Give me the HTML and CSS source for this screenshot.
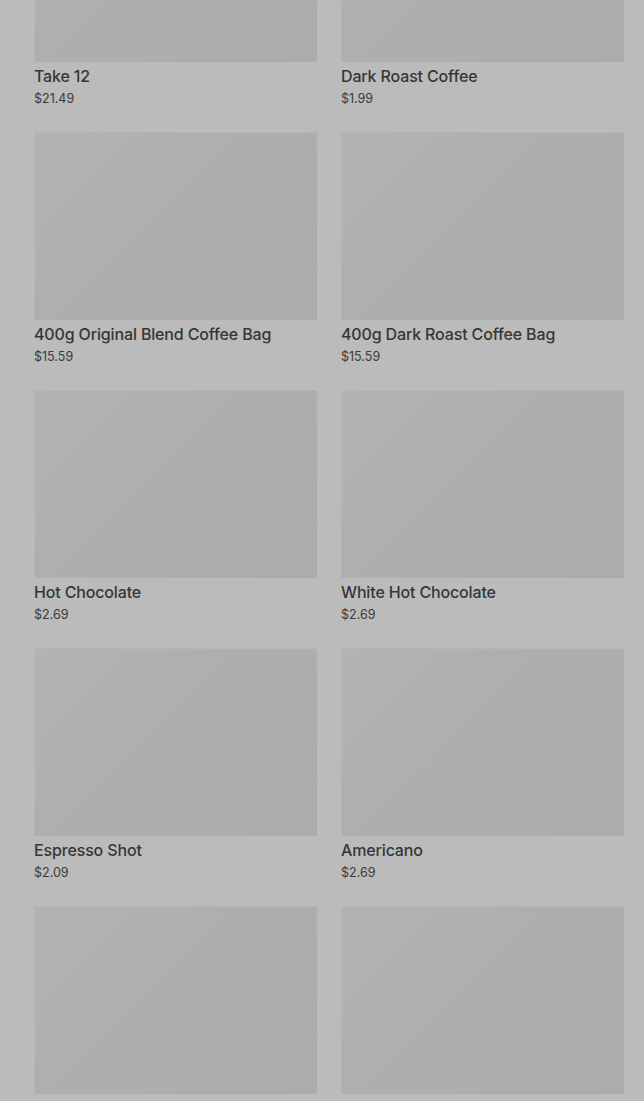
FILE: index.html
```html
<!DOCTYPE html>
<html>
<head>
<meta charset="utf-8">
<link rel="stylesheet" href="styles.css">
</head>
<body>
<main class="grid">
  <div class="card"><div class="thumb"></div><div class="name">Take 12</div><div class="price">$21.49</div></div>
  <div class="card"><div class="thumb"></div><div class="name">Dark Roast Coffee</div><div class="price">$1.99</div></div>
  <div class="card"><div class="thumb"></div><div class="name">400g Original Blend Coffee Bag</div><div class="price">$15.59</div></div>
  <div class="card"><div class="thumb"></div><div class="name">400g Dark Roast Coffee Bag</div><div class="price">$15.59</div></div>
  <div class="card"><div class="thumb"></div><div class="name">Hot Chocolate</div><div class="price">$2.69</div></div>
  <div class="card"><div class="thumb"></div><div class="name">White Hot Chocolate</div><div class="price">$2.69</div></div>
  <div class="card"><div class="thumb"></div><div class="name">Espresso Shot</div><div class="price">$2.09</div></div>
  <div class="card"><div class="thumb"></div><div class="name">Americano</div><div class="price">$2.69</div></div>
  <div class="card"><div class="thumb"></div><div class="name">Caffè Latte</div><div class="price">$2.89</div></div>
  <div class="card"><div class="thumb"></div><div class="name">Caramel Macchiato</div><div class="price">$3.29</div></div>
</main>
</body>
</html>
```
FILE: styles.css
```css
html, body {
  margin: 0;
  padding: 0;
  background: #bbbbbb;
  overflow: hidden;
}
body {
  font-family: Inter, Roboto, "Liberation Sans", sans-serif;
  color: #363636;
}
.grid {
  display: grid;
  grid-template-columns: 283px 283px;
  column-gap: 24px;
  row-gap: 25px;
  padding: 0 20px 0 34px;
  margin-top: -126px;
}
.card {
  display: flex;
  flex-direction: column;
}
.thumb {
  height: 188px;
  background: linear-gradient(135deg, #b3b3b3 0%, #aeaeae 45%, #acacac 100%);
  box-shadow: inset 1px 1px 0 #b6b6b6;
}
.name {
  margin-top: 3px;
  font-size: 16px;
  line-height: 22px;
  font-weight: 500;
  letter-spacing: -0.15px;
  color: #363636;
}
.price {
  margin-top: 3px;
  font-size: 12.5px;
  line-height: 17px;
  color: #3a3a3a;
}
```
